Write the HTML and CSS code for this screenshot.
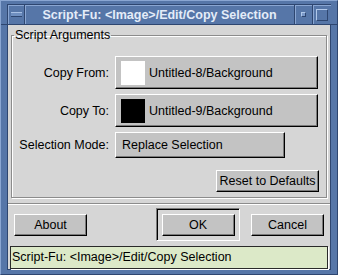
FILE: index.html
```html
<!DOCTYPE html>
<html lang="en">
<head>
    <meta charset="UTF-8">
    <title>Script-Fu: Copy Selection</title>
    <link rel="stylesheet" href="styles.css">
</head>
<body>
    <div class="window">
        <div class="titlebar">
            <div class="corner-left"></div>
            <div class="tb-btn menu"><span class="dash"></span></div>
            <div class="title">Script-Fu: &lt;Image&gt;/Edit/Copy Selection</div>
            <div class="tb-btn iconify"><span class="dot"></span></div>
            <div class="tb-btn maximize"><span class="box"></span></div>
            <div class="corner-right"></div>
        </div>
        <div class="client">
            <fieldset class="args">
                <legend>Script Arguments</legend>
                <div class="grid">
                    <label>Copy From:</label>
                    <button class="btn drawable"><span class="swatch white"></span>Untitled-8/Background</button>
                    <label>Copy To:</label>
                    <button class="btn drawable"><span class="swatch black"></span>Untitled-9/Background</button>
                    <label>Selection Mode:</label>
                    <button class="btn option">Replace Selection</button>
                </div>
                <div class="reset-row">
                    <button class="btn reset">Reset to Defaults</button>
                </div>
            </fieldset>
            <div class="sep"></div>
            <div class="actions">
                <button class="btn action">About</button>
                <div class="default-frame">
                    <button class="btn action">OK</button>
                </div>
                <button class="btn action">Cancel</button>
            </div>
            <div class="status">Script-Fu: &lt;Image&gt;/Edit/Copy Selection</div>
        </div>
    </div>
</body>
</html>
```

FILE: styles.css
```css
body {
    margin: 0;
    font-family: "Liberation Sans", Arial, sans-serif;
    font-size: 12.5px;
    background: #d6d6d6;
}
.window {
    width: 338px;
    height: 275px;
    box-sizing: border-box;
    background: #5676a8;
    display: flex;
    flex-direction: column;
    border-top: 1px solid #8aa6d2;
    border-left: 1px solid #8aa6d2;
    border-right: 1px solid #2e4670;
    border-bottom: 1px solid #2e4670;
}
.titlebar {
    height: 24px;
    display: flex;
    box-sizing: border-box;
    border-bottom: 1px solid #2e4670;
}
.corner-left {
    width: 6px;
    border-right: 1px solid #2e4670;
    margin-top: 3px;
}
.corner-right {
    width: 6px;
    margin-top: 3px;
}
.tb-btn {
    margin-top: 3px;
    border-top: 1px solid #2e4670;
    display: flex;
    align-items: center;
    justify-content: center;
    box-sizing: border-box;
}
.menu {
    width: 17px;
    border-right: 1px solid #2e4670;
    box-shadow: inset 1px 1px 0 #8aa6d2;
}
.dash {
    width: 11px;
    height: 3px;
    background: #6f8fc0;
    border-top: 1px solid #a8c0e4;
    border-bottom: 1px solid #2e4670;
}
.title {
    flex: 1;
    margin-top: 3px;
    border-top: 1px solid #2e4670;
    border-right: 1px solid #2e4670;
    box-shadow: inset 1px 1px 0 #8aa6d2;
    color: #e4ecf8;
    font-weight: bold;
    text-align: center;
    line-height: 20px;
}
.iconify {
    width: 18px;
    border-right: 1px solid #2e4670;
    box-shadow: inset 1px 1px 0 #8aa6d2;
}
.dot {
    width: 3px;
    height: 3px;
    background: #7a98c8;
    border: 1px solid #2e4670;
    border-top-color: #b0c8ea;
    border-left-color: #b0c8ea;
}
.maximize {
    width: 18px;
    box-shadow: inset 1px 1px 0 #8aa6d2;
}
.box {
    width: 10px;
    height: 10px;
    border: 1px solid #2e4670;
    border-top-color: #b0c8ea;
    border-left-color: #b0c8ea;
}
.client {
    flex: 1;
    margin: 0 6px 4px;
    background: #d6d6d6;
    display: flex;
    flex-direction: column;
    border: 1px solid #2e4670;
    border-top: none;
}
.args {
    margin: 3px 3px 0;
    padding: 14px 8px 5px 0;
    border: 1px solid #8c8c8c;
    box-shadow: inset 1px 1px 0 #fff, 1px 1px 0 #fff;
}
.args legend {
    margin-left: 2px;
    padding: 0 1px;
    line-height: 14px;
    color: #000;
}
.grid {
    display: grid;
    grid-template-columns: 97px 1fr;
    column-gap: 6px;
    row-gap: 5px;
    align-items: center;
}
.grid label {
    text-align: right;
    color: #000;
}
.btn {
    font-family: inherit;
    font-size: 12.5px;
    color: #000;
    background: #c3c3c3;
    border: 1px solid;
    border-color: #fff #000 #000 #fff;
    box-shadow: inset -1px -1px 0 #7a7a7a;
    padding: 0;
    margin: 0;
    box-sizing: border-box;
}
.drawable {
    height: 33px;
    display: flex;
    align-items: center;
    text-align: left;
    padding-left: 5px;
}
.swatch {
    width: 24px;
    height: 24px;
    margin-right: 4px;
}
.swatch.white {
    background: #fff;
}
.swatch.black {
    background: #000;
}
.option {
    height: 26px;
    width: 170px;
    text-align: left;
    padding-left: 6px;
}
.reset-row {
    display: flex;
    justify-content: flex-end;
    margin-top: 12px;
    margin-right: -1px;
}
.reset {
    width: 103px;
    height: 22px;
}
.sep {
    margin: 5px 0 3px;
    height: 1px;
    background: #8c8c8c;
    border-bottom: 1px solid #fff;
}
.actions {
    display: flex;
    align-items: center;
    height: 33px;
    padding: 0 6px;
}
.action {
    width: 73px;
    height: 22px;
}
.default-frame {
    margin-left: auto;
    margin-right: 11px;
    width: 84px;
    height: 33px;
    box-sizing: border-box;
    border: 1px solid;
    border-color: #7a7a7a #fff #fff #7a7a7a;
    box-shadow: inset 1px 1px 0 #000;
    display: flex;
    align-items: center;
    justify-content: center;
}
.status {
    margin: 5px 2px 0;
    height: 23px;
    box-sizing: border-box;
    background: #dce9c8;
    border: 1px solid #2a2a2a;
    box-shadow: 1px 1px 0 #fff;
    line-height: 21px;
    padding-left: 1px;
    color: #000;
}
```
